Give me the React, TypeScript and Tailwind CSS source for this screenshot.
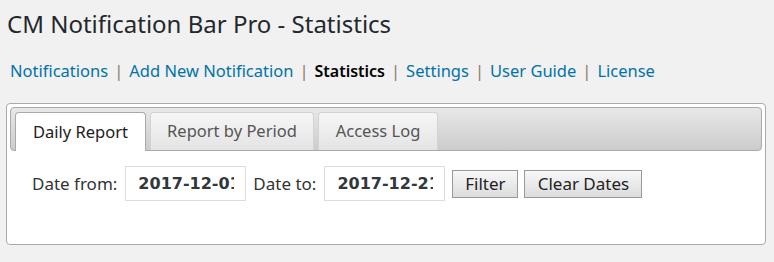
import React from "react";

const font = { fontFamily: '"Noto Sans", "Open Sans", sans-serif' };

export default function App() {
  const links = [
    { t: "Notifications", active: false },
    { t: "Add New Notification", active: false },
    { t: "Statistics", active: true },
    { t: "Settings", active: false },
    { t: "User Guide", active: false },
    { t: "License", active: false },
  ];
  return (
    <div className="w-[774px] h-[262px] bg-[#f1f1f1] overflow-hidden" style={font}>
      <h1 className="pl-[7px] pt-[9px] text-[24px] leading-[30px] text-[#23282d] font-normal">
        CM Notification Bar Pro - Statistics
      </h1>
      <div className="flex items-center pl-[10px] mt-[20px] h-[24px] text-[16.5px] leading-[24px]">
        {links.map((l, i) => (
          <React.Fragment key={l.t}>
            {i > 0 && <span className="px-[6px] text-[#8a7a6a]">|</span>}
            <span className={l.active ? "font-semibold text-[16px] text-[#000]" : "text-[#0073aa]"}>{l.t}</span>
          </React.Fragment>
        ))}
      </div>
      <div className="mt-[20px] ml-[6px] w-[760px] h-[142px] bg-white border border-[#aaa] rounded-[4px] p-[3px]">
        <div className="h-[44px] border border-[#aaa] rounded-[4px] bg-gradient-to-b from-[#e8e8e8] to-[#cccccc] flex items-end pl-[4px] gap-[4px]">
          <div className="h-[39px] -mb-px w-[131px] bg-white border border-b-0 border-[#aaa] rounded-t-[4px] flex items-center justify-center text-[16.5px] text-[#212121]">
            Daily Report
          </div>
          <div className="h-[38px] w-[164px] bg-gradient-to-b from-[#f6f6f6] to-[#e4e4e4] border border-b-0 border-[#d3d3d3] rounded-t-[4px] flex items-center justify-center text-[16.5px] text-[#555]">
            Report by Period
          </div>
          <div className="h-[38px] w-[120px] bg-gradient-to-b from-[#f6f6f6] to-[#e4e4e4] border border-b-0 border-[#d3d3d3] rounded-t-[4px] flex items-center justify-center text-[16.5px] text-[#555]">
            Access Log
          </div>
        </div>
        <div className="flex items-center pl-[22px] pt-[15px] text-[17px] text-[#333]">
          <span>Date from:</span>
          <div
            className="ml-[8px] w-[121px] h-[35px] border border-[#ddd] flex items-center pl-[12px] overflow-hidden whitespace-nowrap text-[16px] font-bold text-[#32373c]"
            style={{ fontFamily: '"DejaVu Sans", sans-serif' }}
          >
            <span className="block w-[96px] shrink-0 overflow-hidden">2017-12-01</span>
          </div>
          <span className="ml-[7px]">Date to:</span>
          <div
            className="ml-[8px] w-[121px] h-[35px] border border-[#ddd] flex items-center pl-[12px] overflow-hidden whitespace-nowrap text-[16px] font-bold text-[#32373c]"
            style={{ fontFamily: '"DejaVu Sans", sans-serif' }}
          >
            <span className="block w-[96px] shrink-0 overflow-hidden">2017-12-21</span>
          </div>
          <div className="ml-[7px] w-[66px] h-[28px] border border-[#999] bg-gradient-to-b from-[#f8f8f8] to-[#dcdcdc] flex items-center justify-center text-[#222]">
            Filter
          </div>
          <div className="ml-[6px] w-[118px] h-[28px] border border-[#999] bg-gradient-to-b from-[#f8f8f8] to-[#dcdcdc] flex items-center justify-center text-[#222]">
            Clear Dates
          </div>
        </div>
      </div>
    </div>
  );
}
